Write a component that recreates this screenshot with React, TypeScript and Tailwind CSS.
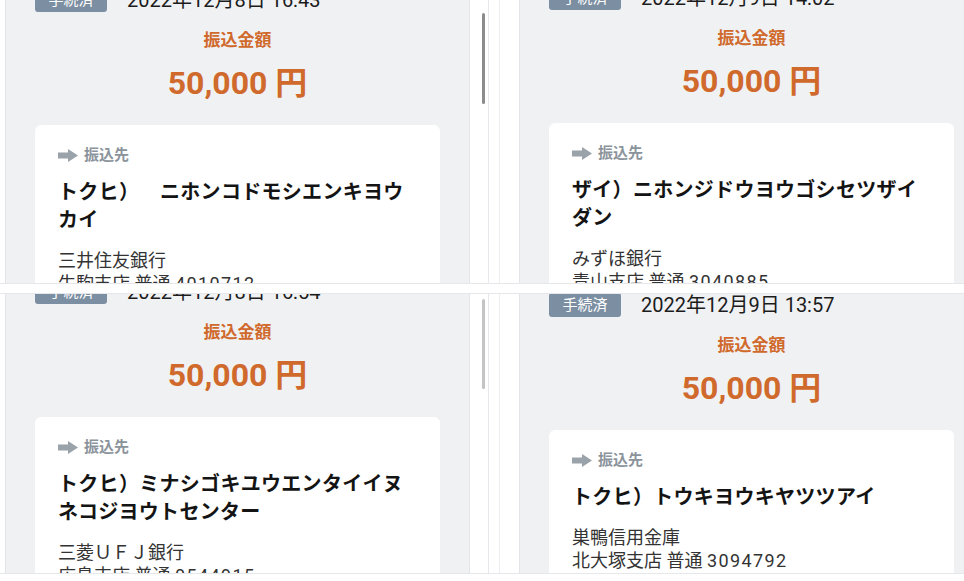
import React from 'react';

type Transfer = {
  date: string;
  name: string[];
  bank: string;
  branch: string;
  account: string;
  shift: string;
};

const top: Transfer[] = [
  {
    date: '2022年12月8日 16:43',
    name: ['トクヒ）\u3000\u2002ニホンコドモシエンキヨウ', 'カイ'],
    bank: '三井住友銀行',
    branch: '生駒支店 普通',
    account: '4010712',
    shift: '-mt-[12px]',
  },
  {
    date: '2022年12月9日 14:02',
    name: ['ザイ）ニホンジドウヨウゴシセツザイ', 'ダン'],
    bank: 'みずほ銀行',
    branch: '青山支店 普通',
    account: '3040885',
    shift: '-mt-[14px]',
  },
];

const bottom: Transfer[] = [
  {
    date: '2022年12月8日 16:54',
    name: ['トクヒ）ミナシゴキユウエンタイイヌ', 'ネコジヨウトセンター'],
    bank: '三菱ＵＦＪ銀行',
    branch: '広島支店 普通',
    account: '0544915',
    shift: '-mt-[14px]',
  },
  {
    date: '2022年12月9日 13:57',
    name: ['トクヒ）トウキヨウキヤツツアイ'],
    bank: '巣鴨信用金庫',
    branch: '北大塚支店 普通',
    account: '3094792',
    shift: '-mt-[1px]',
  },
];

const ArrowIcon = () => (
  <svg width="20" height="13" viewBox="0 0 20 13" className="shrink-0">
    <rect x="0" y="3.5" width="11" height="6" fill="#9aa2aa" />
    <polygon points="10,0 20,6.5 10,13" fill="#9aa2aa" />
  </svg>
);

function TransferView({ t }: { t: Transfer }) {
  return (
    <div className={`w-[463px] shrink-0 flex flex-col px-[29px] ${t.shift}`}>
      {/* status + date */}
      <div className="flex items-center h-[24px] gap-[20px]">
        <span className="w-[72px] h-[24px] rounded-[3px] bg-[#7c8ea2] text-white text-[15px] flex items-center justify-center">
          手続済
        </span>
        <span className="text-[20px] text-[#1c1c1c] whitespace-nowrap">{t.date}</span>
      </div>

      {/* amount */}
      <p className="mt-[16px] text-center text-[17px] leading-[24px] font-bold text-[#d0692c]">振込金額</p>
      <p className="mt-[11px] text-center text-[32px] leading-[40px] font-bold text-[#d0692c]">50,000 円</p>

      {/* destination card */}
      <div className="mt-[22px] bg-white rounded-[6px] px-[23px] pt-[20px] pb-[24px]">
        <div className="flex items-center gap-[6px] h-[20px]">
          <ArrowIcon />
          <span className="text-[15px] font-semibold text-[#8b939b]">振込先</span>
        </div>
        <div className="mt-[13px] text-[20px] leading-[28px] tracking-[0.3px] font-bold text-[#141414]">
          {t.name.map((line) => (
            <p key={line} className="whitespace-pre">
              {line}
            </p>
          ))}
        </div>
        <p className="mt-[15px] text-[18px] leading-[23px] text-[#333]">{t.bank}</p>
        <p className="text-[18px] leading-[23px] text-[#333] whitespace-nowrap">
          {t.branch} <span className="tracking-[1.4px]">{t.account}</span>
        </p>
      </div>
    </div>
  );
}

function LeftPanel({ t, thumb }: { t: Transfer; thumb: string }) {
  return (
    <div className="w-[489px] shrink-0 h-full flex border-r border-[#e6e7ea]">
      <div className="w-[5px] shrink-0" />
      <div className="w-[465px] shrink-0 bg-[#f0f1f3] border-x border-[#e2e4e7] overflow-hidden">
        <TransferView t={t} />
      </div>
      <div className="flex-1 pl-[12px]">
        <div className={`w-[3px] rounded-full ${thumb}`} />
      </div>
    </div>
  );
}

function RightPanel({ t }: { t: Transfer }) {
  return (
    <div className="flex-1 min-w-0 h-full flex border-l border-[#eceef0]">
      <div className="w-[19px] shrink-0" />
      <div className="flex-1 min-w-0 bg-[#f0f1f3] border-l border-[#e2e4e7] overflow-hidden">
        <TransferView t={t} />
      </div>
    </div>
  );
}

export default function App() {
  return (
    <div className="w-[964px] h-[581px] bg-white overflow-hidden flex flex-col font-[Roboto,'Noto_Sans_CJK_JP',sans-serif]">
      <div className="h-[284px] shrink-0 flex gap-[10px] border-b border-[#e6e7ea]">
        <LeftPanel t={top[0]} thumb="mt-[13px] h-[91px] bg-[#8c8c8c]" />
        <RightPanel t={top[1]} />
      </div>
      <div className="mt-[9px] h-[281px] shrink-0 flex gap-[10px] border-y border-[#e6e7ea]">
        <LeftPanel t={bottom[0]} thumb="mt-[5px] h-[90px] bg-[#c4c4c4]" />
        <RightPanel t={bottom[1]} />
      </div>
    </div>
  );
}
